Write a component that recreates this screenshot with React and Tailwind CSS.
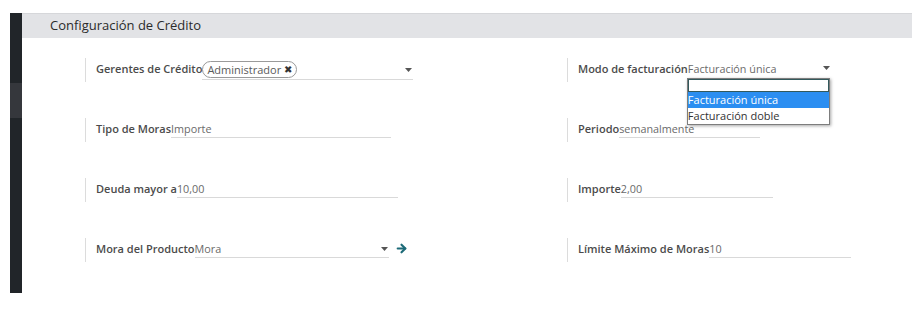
import React from "react";
import { ArrowRight } from "lucide-react";

const Caret = ({ className = "" }) => (
  <svg width="7" height="4" viewBox="0 0 7 4" className={className}>
    <path d="M0 0 L7 0 L3.5 4 Z" fill="#555" />
  </svg>
);

function Field({ label, children }) {
  return (
    <div className="flex items-start h-[24px] border-l border-[#dcdcdc] pl-[10px] pt-[2px]">
      <span className="text-[11px] leading-[18px] font-semibold text-[#4b4b4b] whitespace-nowrap">{label}</span>
      {children}
    </div>
  );
}

function Value({ text, w }) {
  return (
    <div className={`h-[18px] leading-[18px] border-b border-[#d9d9d9] text-[10.8px] text-[#6a6a6a] whitespace-nowrap ${w}`}>{text}</div>
  );
}

export default function App() {
  return (
    <div className="w-[917px] h-[311px] bg-white pt-[13px] relative" style={{ fontFamily: '"Open Sans", "Noto Sans", sans-serif' }}>
      <div className="flex">
        <div className="ml-[10px] w-[12px] h-[280px] flex flex-col">
          <div className="h-[70px] bg-[#212529]" />
          <div className="h-[35px] bg-[#35373c]" />
          <div className="flex-1 bg-[#212529]" />
        </div>
        <div className="w-[890px]">
          <div className="h-[25px] bg-[#e2e3e6] border-t border-[#d6d7da] flex items-center pl-[28px]">
            <span className="text-[13px] font-medium text-[#2b2b2b]">Configuración de Crédito</span>
          </div>
          <div className="pl-[63px] pt-[20px] grid grid-cols-[482px_1fr] gap-y-[36px]">
            <Field label="Gerentes de Crédito">
              <div className="relative -mt-[1px] h-[21px] w-[211px] border-b border-[#d9d9d9] flex items-center">
                <span className="h-[17px] px-[4px] rounded-full border border-[#9a9a9a] text-[11px] leading-[15px] text-[#5a5a5a] font-medium flex items-center gap-[3px]">
                  Administrador <span className="text-[10px] text-[#333]">✖</span>
                </span>
                <Caret className="absolute right-[1px] top-[9px]" />
              </div>
            </Field>
            <Field label="Modo de facturación">
              <div className="relative h-[18px] w-[144px] text-[10.8px] leading-[18px] text-[#6a6a6a] whitespace-nowrap">
                Facturación única
                <Caret className="absolute right-[2px] top-[6px]" />
                <div className="absolute left-[-1px] top-[18px] w-[143px] bg-white border border-[#7d7d7d] shadow-[1px_1px_3px_rgba(0,0,0,0.35)] z-10 text-[#333] text-[11px]">
                  <div className="h-[13px] border border-[#33595c]" />
                  <div className="h-[16px] leading-[16px] bg-[#2b8ef1] text-white">Facturación única</div>
                  <div className="h-[16px] leading-[16px]">Facturación doble</div>
                </div>
              </div>
            </Field>
            <Field label="Tipo de Moras">
              <Value text="Importe" w="w-[220px]" />
            </Field>
            <Field label="Periodo">
              <Value text="semanalmente" w="w-[141px]" />
            </Field>
            <Field label="Deuda mayor a">
              <Value text="10,00" w="w-[221px]" />
            </Field>
            <Field label="Importe">
              <Value text="2,00" w="w-[152px]" />
            </Field>
            <Field label="Mora del Producto">
              <div className="relative h-[18px] w-[194px] border-b border-[#d9d9d9] text-[10.8px] leading-[18px] text-[#6a6a6a]">
                Mora
                <Caret className="absolute right-[1px] top-[7px]" />
              </div>
              <ArrowRight size={13} strokeWidth={4} color="#1d6b78" className="ml-[6px] mt-[2px]" />
            </Field>
            <Field label="Límite Máximo de Moras">
              <Value text="10" w="w-[142px]" />
            </Field>
          </div>
        </div>
      </div>
    </div>
  );
}
